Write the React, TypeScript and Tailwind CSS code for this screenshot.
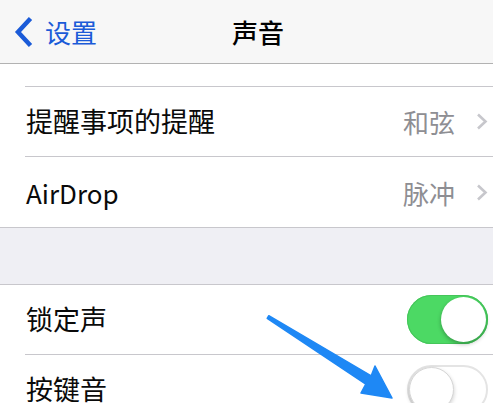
import React from "react";

const font = { fontFamily: '"Noto Sans CJK SC", "Liberation Sans", sans-serif' };

function Chevron() {
  return (
    <svg width="12" height="17" viewBox="0 0 12 17" className="shrink-0">
      <path d="M2 1.5 L9.5 8.5 L2 15.5" fill="none" stroke="#c7c7cc" strokeWidth="2.6" />
    </svg>
  );
}

function Toggle({ on }: { on: boolean }) {
  if (on) {
    return (
      <div className="w-[81px] h-[49px] rounded-full bg-[#4cd964] flex items-center justify-end p-[2px] shadow-[inset_0_0_0_1px_#45c55a]">
        <div className="size-[45px] rounded-full bg-white shadow-[0_2px_4px_rgba(0,0,0,0.3)]" />
      </div>
    );
  }
  return (
    <div className="w-[81px] h-[49px] rounded-full bg-white border-2 border-[#e4e4e4] flex items-center">
      <div className="size-[45px] rounded-full bg-white border border-[#d6d6d6] shadow-[0_2px_4px_rgba(0,0,0,0.2)]" />
    </div>
  );
}

function Row({ label, value, last, latin, children }: { label: string; value?: string; last?: boolean; latin?: boolean; children?: React.ReactNode }) {
  return (
    <div className={last ? "border-b border-[#c8c7cc]" : "pl-[25px]"}>
      <div className={`h-[70px] flex items-center justify-between pr-[5px] ${last ? "pl-[25px]" : "border-b border-[#c8c7cc]"}`}>
        <span className={`${latin ? "text-[26px]" : "text-[27px]"} text-[#0a0a0a] pl-px`}>{label}</span>
        {value !== undefined ? (
          <div className="flex items-center gap-[21px]">
            <span className="text-[26px] text-[#8e8e93]">{value}</span>
            <Chevron />
          </div>
        ) : (
          children
        )}
      </div>
    </div>
  );
}

export default function App() {
  return (
    <div className="relative w-[493px] h-[403px] overflow-hidden bg-white" style={font}>
      <header className="h-[64px] bg-[#f7f7f7] border-b border-[#b2b2b2] flex items-center">
        <div className="w-[232px] flex items-center">
          <svg width="20" height="32" viewBox="0 0 20 32" className="ml-[14px] mr-[11px]">
            <path d="M16.5 2.5 L4 16 L16.5 29.5" fill="none" stroke="#1b5bd8" strokeWidth="4.5" />
          </svg>
          <span className="text-[26px] text-[#1b5bd8]">设置</span>
        </div>
        <span className="text-[26px] font-medium text-black">声音</span>
      </header>

      <div className="pl-[25px]">
        <div className="h-[23px] border-b border-[#c8c7cc]" />
      </div>
      <Row label="提醒事项的提醒" value="和弦" />
      <Row label="AirDrop" value="脉冲" latin last />

      <div className="h-[57px] bg-[#efeff4] border-b border-[#c8c7cc]" />

      <Row label="锁定声">
        <Toggle on />
      </Row>
      <Row label="按键音">
        <Toggle on={false} />
      </Row>

      <svg className="absolute left-0 top-0 pointer-events-none" width="493" height="403" viewBox="0 0 493 403">
        <polygon
          points="268.8,315.7 371.2,375.8 375,366 392,398 361,393 365.8,384.2 267.2,318.3"
          fill="#1e88f5"
          stroke="#1e88f5"
          strokeWidth="1.5"
          strokeLinejoin="round"
        />
      </svg>
    </div>
  );
}
